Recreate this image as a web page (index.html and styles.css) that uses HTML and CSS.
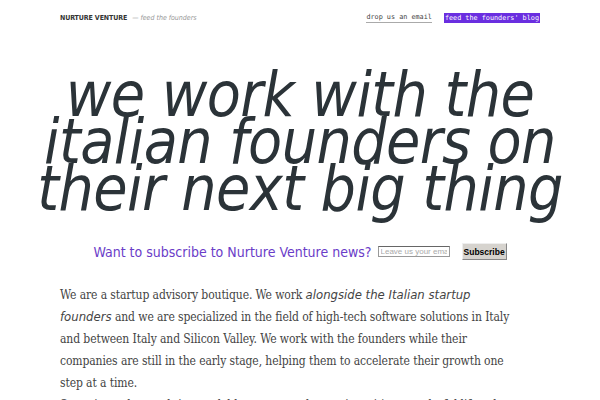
FILE: index.html
```
<!DOCTYPE html>
<html>
<head>
<meta charset="utf-8">
<link rel="stylesheet" href="styles.css">
</head>
<body>
<header class="top">
  <div class="brand"><span class="logo">NURTURE VENTURE</span><span class="tag">— feed the founders</span></div>
  <nav class="links"><a class="mail" href="#">drop us an email</a><a class="blog" href="#">feed the founders' blog</a></nav>
</header>
<h1 class="hero">we work with the<br>italian founders on<br>their next big thing</h1>
<form class="subscribe">
  <span class="ask">Want to subscribe to Nurture Venture news?</span>
  <input class="email" type="text" placeholder="Leave us your email">
  <button class="btn" type="button">Subscribe</button>
</form>
<p class="about">We are a startup advisory boutique. We work <em>alongside the Italian startup founders</em> and we are specialized in the field of high-tech software solutions in Italy and between Italy and Silicon Valley. We work with the founders while their companies are still in the early stage, helping them to accelerate their growth one step at a time.<br>Sometimes the result is a scalable startup and sometimes it's a wonderful lifestyle business.</p>
</body>
</html>
```
FILE: styles.css
```
html, body { margin: 0; padding: 0; background: #fff; }
body { font-family: "DejaVu Sans", sans-serif; font-stretch: condensed; }
.top { display: flex; justify-content: space-between; align-items: center; padding: 11px 60px 0 60px; height: 14px; }
.brand { display: flex; align-items: baseline; gap: 5px; }
.logo { font-family: "DejaVu Sans", sans-serif; font-stretch: condensed; font-weight: bold; font-size: 7px; letter-spacing: -0.1px; color: #333; }
.tag { font-family: "DejaVu Sans", sans-serif; font-stretch: condensed; font-style: italic; font-size: 7px; color: #999; }
.links { display: flex; gap: 12px; align-items: center; }
.links a { font-family: "DejaVu Sans Mono", monospace; font-size: 6.8px; text-decoration: none; }
.mail { color: #444; border-bottom: 1px solid #aaa; padding-bottom: 1px; }
.blog { color: #fff; background: #6a2ee0; padding: 1px 1px; }
.hero { margin: 46px 0 0 0; text-align: center; font-family: "DejaVu Sans", sans-serif; font-stretch: condensed; font-style: italic; font-weight: normal; font-size: 62px; line-height: 47px; letter-spacing: -0.6px; color: #2b3338; }
.subscribe { display: flex; align-items: center; justify-content: center; margin: 31px 0 0 0; gap: 6px; height: 17px; }
.ask { font-family: "DejaVu Sans", sans-serif; font-stretch: condensed; font-size: 14px; color: #6a3cc8; }
.email { width: 66px; height: 9px; font-size: 8px; font-family: "Liberation Sans", sans-serif; border: 1px solid #999; border-top-color: #666; padding: 0 2px; }
.email::placeholder { color: #aaa; }
.btn { margin-left: 6px; font-family: "Liberation Sans", sans-serif; font-weight: bold; font-size: 8.5px; background: #d6d3ce; border: 1px solid #888; border-top-color: #eee; border-left-color: #eee; padding: 2px 1px; color: #000; height: 17px; }
.about { margin: 24px 0 0 60px; width: 450px; font-family: "DejaVu Serif", serif; font-stretch: condensed; font-size: 12px; letter-spacing: -0.1px; line-height: 22px; color: #444; }
.about em { font-family: "DejaVu Sans", sans-serif; font-stretch: normal; font-size: 11.7px; letter-spacing: 0; font-style: italic; }
```
